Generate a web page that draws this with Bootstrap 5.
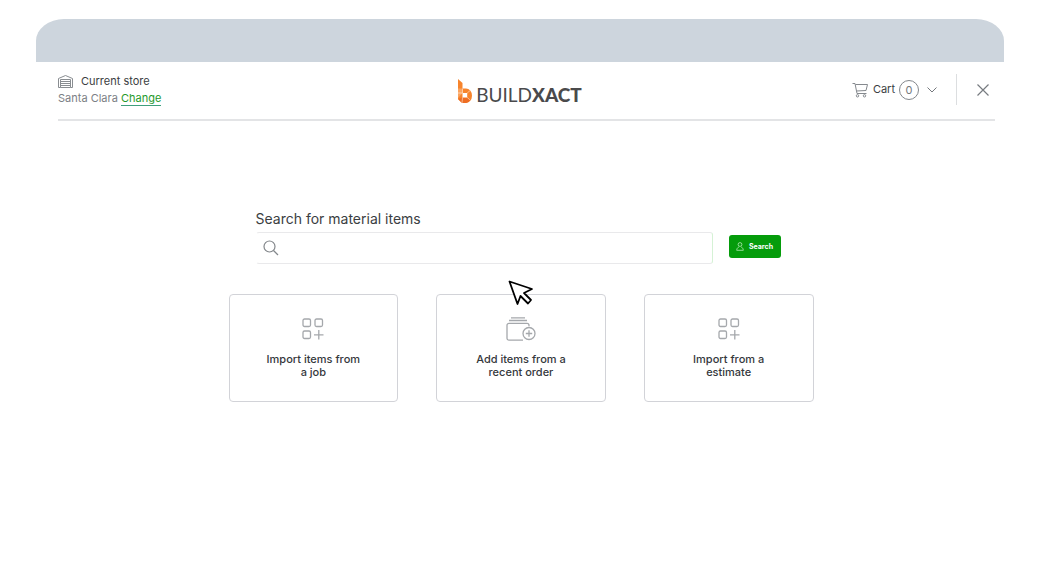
<!DOCTYPE html>
<html lang="en">
<head>
<meta charset="utf-8">
<meta name="viewport" content="width=device-width, initial-scale=1">
<title>Buildxact – Search materials</title>
<link rel="stylesheet" href="https://cdn.jsdelivr.net/npm/bootstrap@5.3.0/dist/css/bootstrap.min.css">
<style>
  body { font-family: Inter, "Liberation Sans", sans-serif; font-size: 11px; line-height: 17px; color: #3b3e42; background: #fff; }
  svg { display: block; flex: none; }
  .shell { padding: 19px 36px 0; }
  .title-strip { height: 43px; background: #cdd5dd; border-radius: 28px 28px 0 0 / 22px 22px 0 0; }
  .top-bar { margin: 0 9px 0 22px; height: 59px; border-bottom: 2px solid #e3e4e6; display: grid; grid-template-columns: 1fr auto 1fr; }
  .store { padding-top: 11px; }
  .store-name { color: #7c8085; }
  .store-name a { color: #1f9a2c; text-decoration: none; border-bottom: 1px solid #3f9f7c; line-height: 13px; display: inline-block; }
  .brand { font-family: Lato, sans-serif; font-size: 19px; line-height: 22px; color: #4a4a4c; padding: 17px 13px 0 0; text-decoration: none; }
  .brand span { padding-top: 5px; }
  .brand b { font-weight: 900; }
  .plain { border: 0; background: none; padding: 0; color: inherit; }
  .cart-area { height: 55px; padding-right: 6px; }
  .count { width: 20px; height: 20px; border: 1px solid #83878c; border-radius: 50%; color: #74787d; line-height: 18px; }
  .cart-rule { width: 1px; height: 31px; background: #dcdee0; margin: 0 20px 0 19px; }
  .picker-wrap { padding: 89px 0 0 2px; }
  .picker { max-width: 585px; margin: 0 auto; }
  .search-form { padding: 0 33px 0 27px; }
  .search-form label { font-size: 14px; line-height: 18px; margin-bottom: 4px; }
  .search-field { height: 32px; border: 1px solid #e9e9eb; border-left-color: #fff; border-right-color: #d5f2d5; border-radius: 3px; padding-left: 6px; }
  .search-field input { border: 0; outline: 0; background: none; font-size: 12px; min-width: 0; }
  .search-btn { background: #059c0b; color: #fff; font-size: 7px; line-height: 11px; font-weight: 700; width: 52px; height: 23px; border: 0; border-radius: 3px; padding: 0; margin-top: 3px; gap: 5px; }
  .choices { margin-top: 30px; display: grid; grid-template-columns: repeat(3, 1fr); gap: 38px; }
  .choice { height: 108px; border: 1px solid #d2d3d8; border-radius: 4px; background: #fff; color: #35383c; font-size: 11px; line-height: 13px; font-weight: 500; padding: 0 30px 1px; }
  .pointer { position: absolute; left: 279px; top: -14px; z-index: 2; }
</style>
</head>
<body>
<div class="shell">
  <div class="title-strip"></div>
  <header class="top-bar">
    <div class="store">
      <div class="d-flex align-items-center">
        <svg class="me-2" width="15" height="14" viewBox="0 0 15 14" fill="none" stroke="#898d91"><path d="M.5 12.500V3.500L7.500.500l7 3v9h-2v-8h-10v8zM2.500 6.500h10M2.500 8.500h10M2.500 10.500h10M2.500 12.500h10"/></svg>
        <span>Current store</span>
      </div>
      <div class="store-name">Santa Clara <a href="#">Change</a></div>
    </div>
    <a class="brand d-flex align-items-start gap-1" href="#" aria-label="Buildxact">
      <svg width="14" height="24" viewBox="0 0 14 24"><path fill="#f7842c" d="M0 0l4.500 4v5.500H8a6 7.200 0 0 1 0 14.400H4L0 20z"/><path fill="#fba35e" d="M0 9.500h4.500V14L0 19z"/><path fill="#ee6d23" d="M9 18.500l3.500 2.500A6 6 0 0 1 8 23.900H4L0 20l4.500-1.500z"/><path fill="#fff" d="M4.500 14h4.700v4.500H4.500z"/><path stroke="#fff" stroke-width=".5" fill="none" d="M0 14h4.500V9.500M4.500 18.500L4 24M9.200 14l3-2.500M9.200 18.500l3 2.500"/></svg>
      <span>BUILD<b>XACT</b></span>
    </a>
    <div class="cart-area d-flex align-items-center justify-content-end">
      <button class="plain d-flex align-items-center" type="button">
        <svg class="me-1" width="17" height="16" viewBox="0 0 17 16" fill="none" stroke="#85898e"><path d="M.5 1.500h2.500L5 11.500h9.500M3.500 2.500h12l-1.500 6-9.500.500"/><circle cx="5.500" cy="13.800" r="1.200"/><circle cx="12.500" cy="13.800" r="1.200"/></svg>
        <span>Cart</span>
        <span class="count ms-1">0</span>
        <svg class="ms-2" width="10" height="6" viewBox="0 0 10 6" fill="none" stroke="#74787d"><path d="M.5.500L5 5l4.500-4.500"/></svg>
      </button>
      <span class="cart-rule"></span>
      <button class="plain" type="button" aria-label="Close">
        <svg width="12" height="12" viewBox="0 0 12 12" stroke="#777b80" stroke-width="1.200"><path d="M.5.500l11 11M11.500.500l-11 11"/></svg>
      </button>
    </div>
  </header>

  <main class="picker-wrap">
    <div class="picker">
      <form class="search-form">
        <label class="d-block" for="material">Search for material items</label>
        <div class="d-flex align-items-start gap-3">
          <div class="search-field d-flex align-items-center flex-grow-1">
            <svg width="16" height="16" viewBox="0 0 16 16" fill="none" stroke="#83878b" stroke-width="1.200"><circle cx="6.500" cy="6.500" r="5.500"/><path d="M10.500 10.500l4.500 4.500"/></svg>
            <input class="flex-grow-1 ms-2" id="material" type="text">
          </div>
          <button class="search-btn d-flex align-items-center justify-content-center" type="submit">
            <svg width="8" height="9" viewBox="0 0 8 9" fill="none" stroke="#b5e8b6" stroke-width=".8"><circle cx="4" cy="2.500" r="1.900"/><path d="M2.800 5C1.500 5.500.800 6.700.700 8.300h6.600C7.200 6.700 6.500 5.500 5.200 5"/></svg>
            <span>Search</span>
          </button>
        </div>
      </form>
      <div class="position-relative">
        <div class="choices">
          <button class="choice d-flex flex-column align-items-center justify-content-center" type="button">
            <svg class="mb-2" width="22" height="24" viewBox="0 -1 22 24" fill="none" stroke="#a5a8ac" stroke-width="1.300"><rect x="1" y="1" width="7.500" height="7.500" rx="1.500"/><rect x="13" y="1" width="7.500" height="7.500" rx="1.500"/><rect x="1" y="13" width="7.500" height="7.500" rx="1.500"/><path d="M12 16.800h9.500M16.800 12v9.500"/></svg>
            <span class="mt-1">Import items from<br>a job</span>
          </button>
          <button class="choice d-flex flex-column align-items-center justify-content-center" type="button">
            <svg class="mb-2" width="30" height="24" viewBox="0 0 30 24" fill="none" stroke="#a5a8ac" stroke-width="1.300"><path d="M5 .800h14M3 3.500h18M17 23.200H3a2 2 0 0 1-2-2V8.300a2 2 0 0 1 2-2h18a2 2 0 0 1 2 2v1"/><circle cx="23" cy="16.500" r="6"/><path d="M19.800 16.500h6.400M23 13.300v6.400"/></svg>
            <span class="mt-1">Add items from a<br>recent order</span>
          </button>
          <button class="choice d-flex flex-column align-items-center justify-content-center" type="button">
            <svg class="mb-2" width="22" height="24" viewBox="0 -1 22 24" fill="none" stroke="#a5a8ac" stroke-width="1.300"><rect x="1" y="1" width="7.500" height="7.500" rx="1.500"/><rect x="13" y="1" width="7.500" height="7.500" rx="1.500"/><rect x="1" y="13" width="7.500" height="7.500" rx="1.500"/><path d="M12 16.800h9.500M16.800 12v9.500"/></svg>
            <span class="mt-1">Import from a<br>estimate</span>
          </button>
        </div>
        <svg class="pointer" width="26" height="26" viewBox="0 0 26 26" fill="#fff" stroke="#000" stroke-width="1.800" stroke-linejoin="round"><path d="M1.500 1.500l22.500 7.500-8 4 7 7-3 3.500-7.500-7.500-3 8z"/></svg>
      </div>
    </div>
  </main>
</div>
<script src="https://cdn.jsdelivr.net/npm/bootstrap@5.3.0/dist/js/bootstrap.bundle.min.js"></script>
</body>
</html>
